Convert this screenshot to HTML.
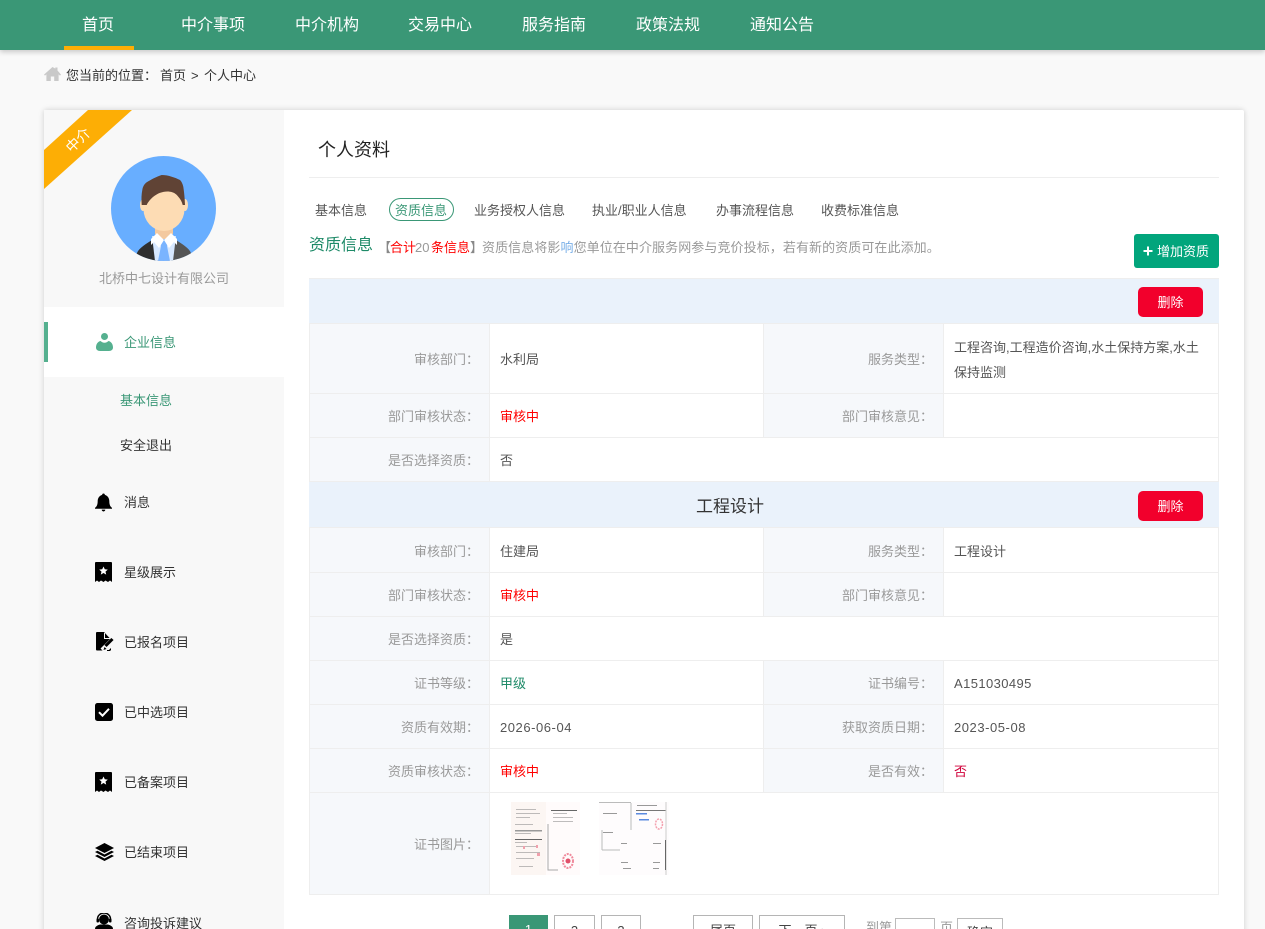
<!DOCTYPE html>
<html lang="zh-CN">
<head>
<meta charset="utf-8">
<title>个人资料</title>
<style>
html,body{margin:0;padding:0;width:1265px;height:929px;overflow:hidden;background:#f9f9f9}
body{font-family:"Liberation Sans","Noto Sans CJK SC",sans-serif;font-size:13px;color:#333;position:relative}
.a{position:absolute;white-space:nowrap}
.box{position:absolute;box-sizing:border-box}
.nav{position:absolute;top:0;left:0;width:1265px;height:50px;background:#3a9776;box-shadow:0 2px 5px rgba(0,0,0,.2)}
.nav .a{top:15px;color:#fff;font-size:16px;line-height:22px}
.card{position:absolute;left:44px;top:110px;width:1200px;height:860px;background:#fff;box-shadow:0 0 6px rgba(0,0,0,.18);border-radius:2px}
.side{position:absolute;left:44px;top:110px;width:240px;height:819px;background:#f8f8f8}
.m{font-size:13px;line-height:20px;color:#333}
.tab{top:201px;font-size:13px;line-height:20px;color:#555}
.band{position:absolute;left:309px;width:910px;background:#eaf2fb}
.lab{position:absolute;background:#f6f8fb;box-sizing:border-box}
.hl{position:absolute;height:1px;left:309px;width:910px;background:#eeeeee}
.vl{position:absolute;width:1px;background:#eeeeee}
.l{position:absolute;width:170px;text-align:right;color:#999;font-size:13px;line-height:20px;white-space:nowrap;margin-top:1px}
.v{position:absolute;color:#555;font-size:13px;line-height:20px;white-space:nowrap;margin-top:1px}
.n{letter-spacing:.55px}
.r{color:#f00}
.del{position:absolute;left:1138px;width:65px;height:30px;background:#f2002c;border-radius:5px;color:#fff;font-size:13px;line-height:31px;text-align:center}
.pg{position:absolute;top:915px;height:30px;box-sizing:border-box;border:1px solid #b5b5b5;background:#fff;color:#444;text-align:center;font-size:13px;line-height:30px}
.bc{top:66px;font-size:13px;line-height:20px;color:#333}
.i{top:238px;font-size:13px;line-height:20px;color:#999}
</style>
</head>
<body>
<div class="card"></div>
<div class="side"></div>

<div class="nav">
  <div class="a" style="left:82px">首页</div>
  <div class="box" style="left:64px;top:46px;width:70px;height:4px;background:#fdae05"></div>
  <div class="a" style="left:181px">中介事项</div>
  <div class="a" style="left:295px">中介机构</div>
  <div class="a" style="left:408px">交易中心</div>
  <div class="a" style="left:522px">服务指南</div>
  <div class="a" style="left:636px">政策法规</div>
  <div class="a" style="left:750px">通知公告</div>
</div>

<svg class="a" style="left:44px;top:66px" width="17" height="16" viewBox="0 0 17 16"><path fill="#c9c9c9" d="M8.500 1 0 8.600l1 1 1.400-1.200V15h4.400v-4.500h3.400V15h4.400V8.400l1.400 1.200 1-1L13.500 4.500V1.500h-2.200v1.100z"/></svg>
<div class="a bc" style="left:66px">您当前的位置：</div>
<div class="a bc" style="left:160px">首页</div>
<div class="a bc" style="left:191px">&gt;</div>
<div class="a bc" style="left:204px">个人中心</div>

<!-- ribbon -->
<svg class="a" style="left:44px;top:110px" width="90" height="80" viewBox="0 0 90 80"><path fill="#fdae05" d="M44 0h44L0 79V40z"/></svg>
<div class="a" style="left:64px;top:130px;color:#fff;font-size:14px;line-height:20px;transform:rotate(-45deg);transform-origin:center">中介</div>

<!-- avatar -->
<svg class="a" style="left:111px;top:156px" width="105" height="105" viewBox="0 0 105 105">
  <defs><clipPath id="c"><circle cx="52.500" cy="52.500" r="52.500"/></clipPath></defs>
  <circle cx="52.500" cy="52.500" r="52.500" fill="#68aeff"/>
  <g clip-path="url(#c)">
    <path fill="#2f2f2f" d="M22 105l4-8c2-5 9-9 15-13h12v21z"/>
    <path fill="#555" d="M84 105l-4-8c-2-5-9-9-15-13H53v21z"/>
    <path fill="#d7e8ff" d="M41 80h24l-3 25H44z"/>
    <path fill="#f3c9a0" d="M44 66h18v12l-9 6-9-6z"/>
    <path fill="#7ab4ff" d="M47 83h12l-3 7 3 15H47l3-15z"/>
    <path fill="#fff" d="M40 83l6-6 7 7-5 8-5-6-3 3zM66 83l-6-6-7 7 5 8 5-6 3 3z"/>
    <ellipse cx="32" cy="49" rx="3" ry="6" fill="#fddcb4"/>
    <ellipse cx="74" cy="49" rx="3" ry="6" fill="#fddcb4"/>
    <ellipse cx="53" cy="53" rx="20.500" ry="22" fill="#fddcb4"/>
    <path fill="#604335" d="M30.700 49C30.200 43 30.500 38 31.300 34 32 30 33.500 28 35.700 26.300 40 23.500 46 20.500 50.700 19 57 19 64 21.500 69 24c1.500 1.500 2.700 4 3.300 6.700.8 5 1.500 12 1.700 18.300h-2.300C71 46 69.500 43 67.300 40.700 65 37.500 62 36 59 35.700 53 34.800 47 37 42.300 40.700 39.500 43 37 46 35.700 49z"/>
  </g>
</svg>
<div class="a" style="left:99px;top:269px;font-size:13px;line-height:20px;color:#999">北桥中七设计有限公司</div>

<!-- side active -->
<div class="box" style="left:44px;top:307px;width:240px;height:70px;background:#fff"></div>
<div class="box" style="left:44px;top:322px;width:4px;height:40px;background:#55b08f"></div>
<svg class="a" style="left:96px;top:333px" width="17" height="18" viewBox="0 0 17 18"><circle cx="8.500" cy="3.500" r="3.500" fill="#55b08f"/><path fill="#55b08f" d="M4 18c-2.500 0-4-1.500-4-3.500 0-3.500 2-6 4.500-6.500C5.500 9 7 9.700 8.500 9.700S11.500 9 12.500 8c2.500.5 4.500 3 4.500 6.500 0 2-1.500 3.500-4 3.500z"/></svg>
<div class="a m" style="left:124px;top:333px;color:#3a9776">企业信息</div>
<div class="a m" style="left:120px;top:391px;color:#3a9776">基本信息</div>
<div class="a m" style="left:120px;top:436px">安全退出</div>

<svg class="a" style="left:95px;top:493px" width="17" height="19" viewBox="0 0 19 20"><path d="M9.500 0c1 0 1.500.6 1.500 1.500C14 2.300 16 5 16 8.500c0 3.500.8 6 3 7.500v1H0v-1c2.200-1.500 3-4 3-7.500C3 5 5 2.300 8 1.500 8 .6 8.500 0 9.500 0zM7.500 18h4c0 1.200-.8 2-2 2s-2-.8-2-2z" fill="#000"/></svg>
<div class="a m" style="left:124px;top:493px">消息</div>

<svg class="a" style="left:95px;top:562px" width="17" height="20" viewBox="0 0 17 20"><path d="M1 0h15a1 1 0 0 1 1 1v19l-2-1.500-2 1.500-2.500-1.500L8.500 20 6 18.500 4 20l-2-1.500L0 20V1a1 1 0 0 1 1-1z" fill="#000"/><path d="M8.500 4.500l1.300 2.800 3 .3-2.300 2 .7 3-2.700-1.600-2.700 1.600.7-3-2.300-2 3-.3z" fill="#fff"/></svg>
<div class="a m" style="left:124px;top:563px">星级展示</div>

<svg class="a" style="left:96px;top:632px" width="19" height="19" viewBox="0 0 19 19"><path d="M1 0H8L15 7.500V18.500H1a1 1 0 0 1-1-1V1a1 1 0 0 1 1-1z" fill="#000"/><path d="M8.500 1v5.500H14" fill="none" stroke="#f8f8f8" stroke-width="1"/><path d="M19 7 7 19" stroke="#f8f8f8" stroke-width="7" fill="none"/><path d="M16.500 7 9.500 14" stroke="#000" stroke-width="3" fill="none"/><path d="M8.500 15l-1 3 3-1z" fill="#000"/><path d="M11 18.500h3" stroke="#000"/></svg>
<div class="a m" style="left:124px;top:633px">已报名项目</div>

<svg class="a" style="left:95px;top:703px" width="18" height="18" viewBox="0 0 18 18"><rect width="18" height="18" rx="2.500" fill="#000"/><path d="M4 9.200l3.500 3.500L14 5.800" stroke="#fff" stroke-width="2" fill="none"/></svg>
<div class="a m" style="left:124px;top:703px">已中选项目</div>

<svg class="a" style="left:95px;top:772px" width="17" height="20" viewBox="0 0 17 20"><path d="M1 0h15a1 1 0 0 1 1 1v19l-2-1.500-2 1.500-2.500-1.500L8.500 20 6 18.500 4 20l-2-1.500L0 20V1a1 1 0 0 1 1-1z" fill="#000"/><path d="M8.500 4.500l1.300 2.800 3 .3-2.300 2 .7 3-2.700-1.600-2.700 1.600.7-3-2.300-2 3-.3z" fill="#fff"/></svg>
<div class="a m" style="left:124px;top:773px">已备案项目</div>

<svg class="a" style="left:95px;top:843px" width="19" height="18" viewBox="0 0 19 18"><path d="M9.500 0L19 5l-9.500 5L0 5z" fill="#000"/><path d="M2.500 7.800l7 3.700 7-3.700L19 9l-9.500 5L0 9z" fill="#000"/><path d="M2.500 11.800l7 3.700 7-3.700L19 13l-9.500 5L0 13z" fill="#000"/></svg>
<div class="a m" style="left:124px;top:843px">已结束项目</div>

<svg class="a" style="left:95px;top:913px" width="18" height="16" viewBox="0 0 18 16"><circle cx="9" cy="6.500" r="5" fill="#000"/><path d="M2.500 7V6a6.500 6 0 0 1 13 0v1" fill="none" stroke="#000" stroke-width="1.500"/><rect x="1.500" y="5.500" width="2.500" height="4" rx="1" fill="#000"/><rect x="14" y="5.500" width="2.500" height="4" rx="1" fill="#000"/><path d="M0 16c0-2.500 2-3.500 5-4.500h8c3 1 5 2 5 4.500z" fill="#000"/></svg>
<div class="a m" style="left:124px;top:914px">咨询投诉建议</div>

<!-- main head -->
<div class="a" style="left:318px;top:138px;font-size:18px;line-height:24px;color:#222">个人资料</div>
<div class="box" style="left:309px;top:177px;width:910px;height:1px;background:#eee"></div>

<div class="a tab" style="left:315px">基本信息</div>
<div class="box" style="left:389px;top:198px;width:65px;height:23px;border:1px solid #3a9776;border-radius:12px"></div>
<div class="a tab" style="left:395px;color:#3a9776">资质信息</div>
<div class="a tab" style="left:474px">业务授权人信息</div>
<div class="a tab" style="left:592px">执业/职业人信息</div>
<div class="a tab" style="left:716px">办事流程信息</div>
<div class="a tab" style="left:821px">收费标准信息</div>

<div class="a" style="left:309px;top:234px;font-size:16px;line-height:24px;color:#1e8a68">资质信息</div>
<div class="a i" style="left:378px;color:#888">【</div>
<div class="a i" style="left:390px;color:#f00">合计</div>
<div class="a i" style="left:415px">20</div>
<div class="a i" style="left:431px;color:#f00">条信息</div>
<div class="a i" style="left:470px;color:#888">】</div>
<div class="a i" style="left:482px;letter-spacing:.08px">资质信息将影<span style="color:#7ab0e8">响</span>您单位在中介服务网参与竞价投标，若有新的资质可在此添加。</div>

<div class="box" style="left:1134px;top:234px;width:85px;height:34px;background:#02a57c;border-radius:3px"></div>
<svg class="a" style="left:1143px;top:246px" width="10" height="10" viewBox="0 0 10 10"><path d="M5 0.500v9M0.500 5h9" stroke="#fff" stroke-width="2"/></svg>
<div class="a" style="left:1157px;top:242px;color:#fff;font-size:13px;line-height:20px">增加资质</div>

<!-- table backgrounds -->
<div class="band" style="top:278px;height:45px"></div>
<div class="band" style="top:482px;height:46px"></div>

<div class="lab" style="left:309px;top:324px;width:181px;height:158px"></div>
<div class="lab" style="left:764px;top:324px;width:180px;height:113px"></div>
<div class="lab" style="left:309px;top:528px;width:181px;height:366px"></div>
<div class="lab" style="left:764px;top:528px;width:180px;height:88px"></div>
<div class="lab" style="left:764px;top:661px;width:180px;height:131px"></div>

<div class="hl" style="top:278px"></div>
<div class="hl" style="top:323px"></div>
<div class="hl" style="top:393px"></div>
<div class="hl" style="top:437px"></div>
<div class="hl" style="top:481px"></div>
<div class="hl" style="top:527px"></div>
<div class="hl" style="top:572px"></div>
<div class="hl" style="top:616px"></div>
<div class="hl" style="top:660px"></div>
<div class="hl" style="top:704px"></div>
<div class="hl" style="top:748px"></div>
<div class="hl" style="top:792px"></div>
<div class="hl" style="top:894px"></div>

<div class="vl" style="left:309px;top:324px;height:157px"></div>
<div class="vl" style="left:489px;top:324px;height:157px"></div>
<div class="vl" style="left:763px;top:324px;height:113px"></div>
<div class="vl" style="left:943px;top:324px;height:113px"></div>
<div class="vl" style="left:1218px;top:324px;height:157px"></div>
<div class="vl" style="left:309px;top:528px;height:366px"></div>
<div class="vl" style="left:489px;top:528px;height:366px"></div>
<div class="vl" style="left:763px;top:528px;height:88px"></div>
<div class="vl" style="left:943px;top:528px;height:88px"></div>
<div class="vl" style="left:763px;top:661px;height:131px"></div>
<div class="vl" style="left:943px;top:661px;height:131px"></div>
<div class="vl" style="left:1218px;top:528px;height:366px"></div>

<div class="del" style="top:287px">删除</div>
<div class="del" style="top:491px">删除</div>
<div class="a" style="left:696px;top:495px;font-size:17px;line-height:24px;color:#333">工程设计</div>

<!-- block 1 -->
<div class="l" style="left:309px;top:349px">审核部门：</div>
<div class="v" style="left:500px;top:349px">水利局</div>
<div class="l" style="left:763px;top:349px">服务类型：</div>
<div class="v" style="left:954px;top:334px;line-height:25px">工程咨询,工程造价咨询,水土保持方案,水土<br>保持监测</div>
<div class="l" style="left:309px;top:406px">部门审核状态：</div>
<div class="v r" style="left:500px;top:406px">审核中</div>
<div class="l" style="left:763px;top:406px">部门审核意见：</div>
<div class="l" style="left:309px;top:450px">是否选择资质：</div>
<div class="v" style="left:500px;top:450px">否</div>

<!-- block 2 -->
<div class="l" style="left:309px;top:541px">审核部门：</div>
<div class="v" style="left:500px;top:541px">住建局</div>
<div class="l" style="left:763px;top:541px">服务类型：</div>
<div class="v" style="left:954px;top:541px">工程设计</div>
<div class="l" style="left:309px;top:585px">部门审核状态：</div>
<div class="v r" style="left:500px;top:585px">审核中</div>
<div class="l" style="left:763px;top:585px">部门审核意见：</div>
<div class="l" style="left:309px;top:629px">是否选择资质：</div>
<div class="v" style="left:500px;top:629px">是</div>
<div class="l" style="left:309px;top:673px">证书等级：</div>
<div class="v" style="left:500px;top:673px;color:#1e8a68">甲级</div>
<div class="l" style="left:763px;top:673px">证书编号：</div>
<div class="v n" style="left:954px;top:673px;letter-spacing:.4px">A151030495</div>
<div class="l" style="left:309px;top:717px">资质有效期：</div>
<div class="v n" style="left:500px;top:717px">2026-06-04</div>
<div class="l" style="left:763px;top:717px">获取资质日期：</div>
<div class="v n" style="left:954px;top:717px">2023-05-08</div>
<div class="l" style="left:309px;top:761px">资质审核状态：</div>
<div class="v r" style="left:500px;top:761px">审核中</div>
<div class="l" style="left:763px;top:761px">是否有效：</div>
<div class="v" style="left:954px;top:761px;color:#d0003a">否</div>
<div class="l" style="left:309px;top:834px">证书图片：</div>

<!-- thumbnails -->
<svg class="a" style="left:511px;top:802px" width="69" height="73" viewBox="0 0 69 73">
  <rect width="69" height="73" fill="#fcf6f3"/>
  <rect x="35" y="0" width="34" height="73" fill="#fffbfb"/>
  <g fill="#8a8a8a" opacity=".55">
    <rect x="5" y="7" width="20" height="1"/><rect x="5" y="11" width="24" height="1"/><rect x="5" y="15" width="14" height="1"/><rect x="4" y="22" width="18" height="1"/>
    <rect x="4" y="31" width="16" height="1"/><rect x="4" y="40" width="12" height="1"/>
    <rect x="5" y="44" width="22" height="1"/><rect x="5" y="50" width="24" height="1"/><rect x="5" y="56" width="18" height="1"/><rect x="8" y="64" width="14" height="1"/>
    <rect x="42" y="11" width="14" height="1"/><rect x="42" y="15" width="20" height="1"/><rect x="42" y="19" width="20" height="1"/>
  </g>
  <rect x="40" y="8" width="26" height="1" fill="#666"/>
  <rect x="4" y="28" width="27" height="1.500" fill="#999"/>
  <rect x="4" y="37" width="27" height="1" fill="#666"/>
  <path d="M37 22v46h10" stroke="#aaa" fill="none"/>
  <ellipse cx="57" cy="59" rx="5" ry="7" fill="none" stroke="#f08a9c" stroke-width="2" stroke-dasharray="2 1"/>
  <circle cx="57" cy="59" r="2.500" fill="#e0506a"/>
  <g fill="#f0a0ac"><rect x="12" y="44" width="2" height="3"/><rect x="25" y="43" width="2" height="3"/><rect x="26" y="51" width="3" height="3"/></g>
</svg>
<svg class="a" style="left:599px;top:802px" width="70" height="73" viewBox="0 0 70 73">
  <rect width="70" height="73" fill="#fefcfd"/>
  <path d="M0 .5h32M32 1v27" stroke="#bbb" fill="none"/>
  <path d="M37 8.500h30" stroke="#777"/>
  <path d="M67 0v73" stroke="#ccc"/>
  <path d="M66.500 38v30" stroke="#666"/>
  <path d="M3 28v20M3 48h18" stroke="#bbb" fill="none"/>
  <g fill="#999"><rect x="4" y="11" width="14" height="1"/><rect x="38" y="3" width="20" height="1"/><rect x="4" y="30" width="10" height="1"/><rect x="22" y="41" width="6" height="1"/><rect x="54" y="41" width="8" height="1"/><rect x="22" y="60" width="7" height="1"/><rect x="54" y="60" width="7" height="1"/><rect x="24" y="66" width="8" height="1"/><rect x="54" y="66" width="6" height="1"/></g>
  <rect x="37" y="11" width="11" height="1.500" fill="#5a8ae0"/><rect x="40" y="17" width="10" height="1.500" fill="#5a8ae0"/>
  <ellipse cx="60" cy="22" rx="3.500" ry="5" fill="none" stroke="#f4a0ae" stroke-width="1.500" stroke-dasharray="2 1"/>
</svg>

<!-- pagination -->
<div class="box" style="left:509px;top:915px;width:39px;height:30px;background:#3a9776;color:#fff;text-align:center;line-height:30px">1</div>
<div class="pg" style="left:554px;width:41px">2</div>
<div class="pg" style="left:601px;width:40px">3</div>
<div class="pg" style="left:693px;width:60px">尾页</div>
<div class="pg" style="left:759px;width:86px">下一页 ›</div>
<div class="a" style="left:866px;top:918px;font-size:13px;line-height:20px;color:#999">到第</div>
<div class="box" style="left:895px;top:918px;width:40px;height:30px;border:1px solid #bbb;background:#fff"></div>
<div class="a" style="left:940px;top:918px;font-size:13px;line-height:20px;color:#999">页</div>
<div class="box" style="left:957px;top:918px;width:46px;height:30px;border:1px solid #bbb;background:#fff;text-align:center;font-size:13px;line-height:28px;color:#444">确定</div>
</body>
</html>
